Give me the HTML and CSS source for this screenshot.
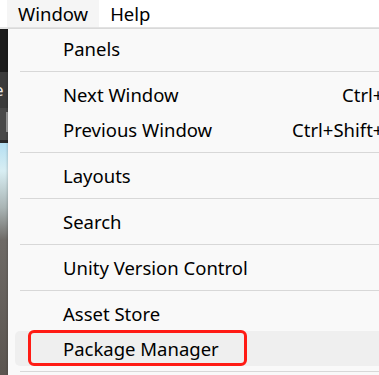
FILE: index.html
```
<!DOCTYPE html>
<html lang="en">
<head>
    <meta charset="UTF-8">
    <meta name="viewport" content="width=device-width, initial-scale=1.0">
    <title>Window Menu</title>
    <link rel="stylesheet" href="styles.css">
</head>
<body>
    <div class="menubar">
        <div class="menubar-item open">Window</div>
        <div class="menubar-item">Help</div>
    </div>

    <div class="workspace">
        <!-- editor behind the menu, only a sliver shows -->
        <div class="editor-strip">
            <div class="strip-dark"></div>
            <div class="strip-tab">e</div>
            <div class="strip-toolbar"><span class="strip-handle"></span></div>
            <div class="strip-scene"></div>
        </div>

        <div class="menu">
            <div class="menu-item"><span>Panels</span></div>
            <div class="menu-sep"></div>
            <div class="menu-item"><span>Next Window</span><span class="shortcut">Ctrl+Tab</span></div>
            <div class="menu-item"><span>Previous Window</span><span class="shortcut">Ctrl+Shift+Tab</span></div>
            <div class="menu-sep"></div>
            <div class="menu-item"><span>Layouts</span></div>
            <div class="menu-sep"></div>
            <div class="menu-item"><span>Search</span></div>
            <div class="menu-sep"></div>
            <div class="menu-item"><span>Unity Version Control</span></div>
            <div class="menu-sep"></div>
            <div class="menu-item"><span>Asset Store</span></div>
            <div class="menu-item hovered">
                <span>Package Manager</span>
                <div class="annotation"></div>
            </div>
            <div class="menu-sep"></div>
        </div>
    </div>
</body>
</html>
```
FILE: styles.css
```
body {
    margin: 0;
    padding: 0;
    font-family: "Noto Sans", "Open Sans", sans-serif;
    color: #000;
    background: #fff;
    width: 379px;
    height: 375px;
    overflow: hidden;
}

.menubar {
    height: 27px;
    display: flex;
    align-items: stretch;
    padding-left: 7px;
    background: #fff;
    border-bottom: 2px solid #e4e4e4;
}

.menubar-item {
    display: flex;
    align-items: center;
    padding: 0 11px;
    font-size: 18.5px;
}

.menubar-item.open {
    background: #f5f5f5;
}

.workspace {
    display: flex;
    height: 346px;
}

.editor-strip {
    width: 8px;
    flex-shrink: 0;
    display: flex;
    flex-direction: column;
}

.strip-dark {
    height: 43px;
    background: #1c1c1c;
}

.strip-tab {
    height: 36px;
    background: #3b3b3b;
    color: #e8e8e8;
    font-size: 17px;
    line-height: 36px;
    text-indent: -6px;
    overflow: hidden;
}

.strip-toolbar {
    height: 28px;
    background: #484848;
    border-bottom: 3px solid #2a2a2a;
    display: flex;
    justify-content: flex-end;
    padding-top: 4px;
}

.strip-handle {
    width: 2px;
    height: 20px;
    background: #9a9a9a;
}

.strip-scene {
    flex: 1;
    background: linear-gradient(#b4dff2 0%, #d8eef3 12%, #a9b4b4 28%, #6e6a66 42%, #5b5550 100%);
}

.menu {
    width: 460px;
    flex-shrink: 0;
    background: #f9f9f9;
    padding-top: 2px;
    box-shadow: -1px 0 2px rgba(0, 0, 0, 0.15);
    font-size: 18.5px;
}

.menu-item {
    height: 35px;
    display: flex;
    align-items: center;
    justify-content: space-between;
    padding: 0 54px 0 55px;
    position: relative;
}

.menu-item.hovered {
    background: #efefef;
    margin-left: 7px;
    padding-left: 48px;
    border-radius: 5px 0 0 5px;
}

.menu-sep {
    height: 1px;
    margin: 5px 0 5px 12px;
    background: #d8d8d8;
}

/* red highlight box drawn over the item */
.annotation {
    position: absolute;
    left: 13px;
    top: -1px;
    width: 213px;
    height: 30px;
    border: 3.5px solid #ff1b14;
    border-radius: 6px;
}
```
